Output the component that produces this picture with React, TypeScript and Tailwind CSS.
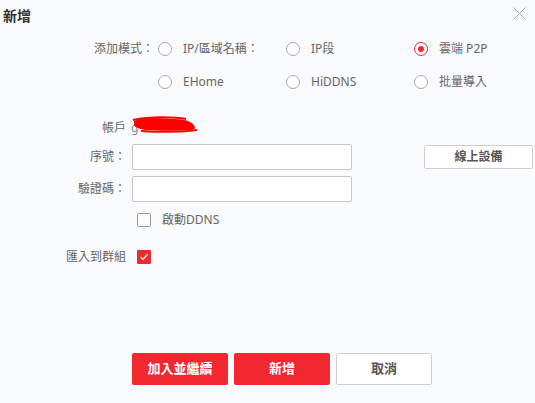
import React from "react";

const font = { fontFamily: '"Noto Sans", "Noto Sans CJK TC", sans-serif' };

function Radio({ checked, label }: { checked?: boolean; label: string }) {
  return (
    <div className="flex items-center w-[128px]">
      <span
        className={`w-[14px] h-[14px] rounded-full border flex items-center justify-center bg-white ${
          checked ? "border-[#f3272f]" : "border-[#a8a8a8]"
        }`}
      >
        {checked && <span className="w-[6px] h-[6px] rounded-full bg-[#f3272f]" />}
      </span>
      <span className="ml-[11px] text-[12px] text-[#666]">{label}</span>
    </div>
  );
}

function Label({ children }: { children: React.ReactNode }) {
  return <div className="w-[126px] text-right text-[12px] text-[#666] shrink-0">{children}</div>;
}

export default function App() {
  return (
    <div className="w-[535px] h-[403px] bg-[#f9fafc] relative flex flex-col" style={font}>
      {/* 標題列 */}
      <div className="flex items-center justify-between h-[30px] pl-[3px] pr-[9px]">
        <span className="text-[14px] font-bold text-[#333]">新增</span>
        <svg width="13" height="13" viewBox="0 0 13 13" className="text-[#aaa] mb-[4px]">
          <path d="M0.5 0.5 L12.5 12.5 M12.5 0.5 L0.5 12.5" stroke="currentColor" strokeWidth="1" />
        </svg>
      </div>

      {/* 添加模式 */}
      <div className="flex mt-[10px]">
        <div className="w-[154px] shrink-0 text-right text-[12px] text-[#666] leading-[18px]">添加模式：</div>
        <div className="ml-[4px] flex flex-col gap-[15px]">
          <div className="flex h-[18px]">
            <Radio label="IP/區域名稱：" />
            <Radio label="IP段" />
            <Radio checked label="雲端 P2P" />
          </div>
          <div className="flex h-[18px]">
            <Radio label="EHome" />
            <Radio label="HiDDNS" />
            <Radio label="批量導入" />
          </div>
        </div>
      </div>

      {/* 帳戶 */}
      <div className="flex items-center mt-[28px] h-[18px]">
        <Label>帳戶</Label>
        <div className="relative ml-[5px] w-[70px] h-[18px] text-[12px] text-[#888]">
          <span>g</span>
          <svg className="absolute left-0 top-[-4px]" width="70" height="20" viewBox="0 0 70 20">
            <path
              d="M3 6 C12 2, 28 3, 40 4 C50 4, 58 5, 62 9 C64 12, 66 14, 60 15 C48 16, 28 16, 14 15 C8 14, 4 12, 3 10 Z"
              fill="#ff0000"
            />
            <path d="M2 5 C20 1, 45 2, 55 4 M10 16 C25 17, 50 17, 66 15" stroke="#ff0000" strokeWidth="2" fill="none" />
          </svg>
        </div>
      </div>

      {/* 序號 */}
      <div className="flex items-center mt-[7px]">
        <Label>序號：</Label>
        <div className="ml-[6px] w-[220px] h-[26px] bg-white border border-[#c8c8c8] rounded-[2px]" />
        <button className="ml-[72px] w-[109px] h-[24px] bg-white border border-[#cfcfcf] rounded-[2px] text-[12px] font-bold text-[#555]">
          線上設備
        </button>
      </div>

      {/* 驗證碼 */}
      <div className="flex items-center mt-[6px]">
        <Label>驗證碼：</Label>
        <div className="ml-[6px] w-[220px] h-[26px] bg-white border border-[#c8c8c8] rounded-[2px]" />
      </div>

      {/* 啟動DDNS */}
      <div className="flex items-center mt-[11px] pl-[137px] h-[14px]">
        <span className="w-[14px] h-[14px] bg-white border border-[#999] rounded-[2px]" />
        <span className="ml-[11px] text-[12px] text-[#666]">啟動DDNS</span>
      </div>

      {/* 匯入到群組 */}
      <div className="flex items-center mt-[23px] h-[14px]">
        <div className="w-[126px] pl-[66px] shrink-0 text-[12px] text-[#666]">匯入到群組</div>
        <span className="ml-[11px] w-[14px] h-[14px] bg-[#f3272f] rounded-[1px] flex items-center justify-center">
          <svg width="10" height="8" viewBox="0 0 10 8">
            <path d="M1.5 4 L4 6.3 L8.5 1.5" stroke="#fbd2d4" strokeWidth="1.6" fill="none" />
          </svg>
        </span>
      </div>

      {/* 底部按鈕 */}
      <div className="flex mt-auto mb-[18px] pl-[132px] gap-[6px]">
        <button className="w-[96px] h-[32px] bg-[#f3272f] rounded-[2px] text-white text-[13px] font-bold">加入並繼續</button>
        <button className="w-[96px] h-[32px] bg-[#f3272f] rounded-[2px] text-white text-[13px] font-bold">新增</button>
        <button className="w-[96px] h-[32px] bg-white border border-[#cfcfcf] rounded-[2px] text-[#555] text-[13px] font-bold">
          取消
        </button>
      </div>
    </div>
  );
}
